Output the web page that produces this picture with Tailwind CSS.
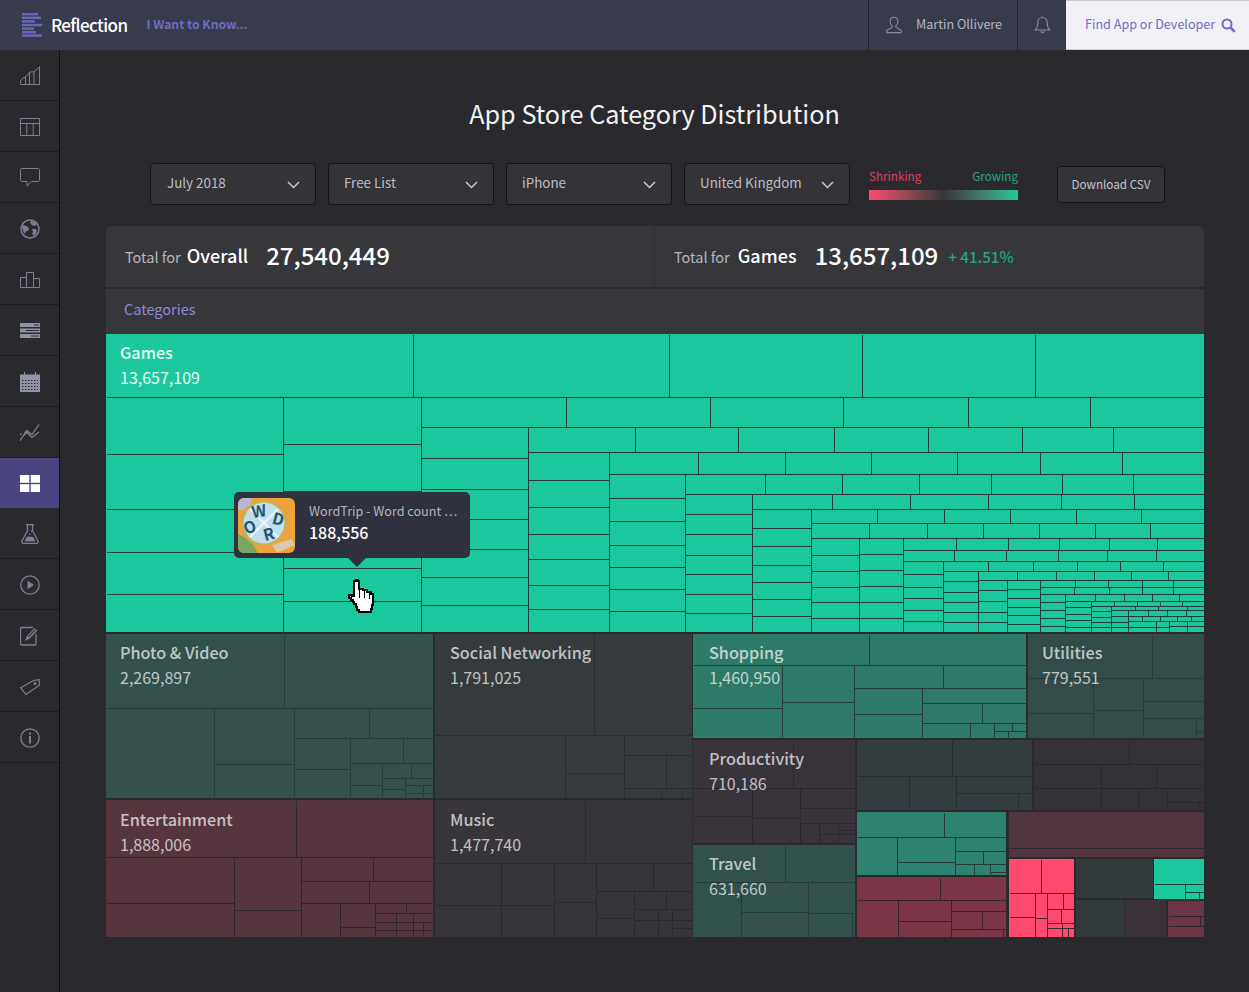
<!DOCTYPE html>
<html>
<head>
  <title>App Store Category Distribution</title>
  <script src="https://cdn.jsdelivr.net/npm/@tailwindcss/browser@4"></script>
</head>
<body class="h-[992px] overflow-hidden bg-[#29292e] font-['Noto_Sans_CJK_SC','Liberation_Sans',sans-serif] text-[#c9c9cf]">

  <!-- top bar -->
  <header class="flex h-[50px] items-stretch bg-[#383b4c]">
    <div class="flex items-center pl-[22px]">
      <svg width="21" height="24" viewBox="0 0 21 24" fill="#6a66b8">
        <rect x="0" y="0" width="16" height="2.4"/><rect x="0" y="3.6" width="19" height="2.4"/><rect x="0" y="7.2" width="13" height="2.4"/><rect x="0" y="10.8" width="20" height="2.4"/><rect x="0" y="14.4" width="12" height="2.4"/><rect x="0" y="18" width="14" height="2.4"/><rect x="0" y="21.4" width="20" height="2.4"/>
      </svg>
      <span class="ml-[8px] pb-[1px] text-[17px] font-medium tracking-[-0.6px] text-white">Reflection</span>
      <span class="ml-[19px] pb-[2px] text-[12.200px] font-bold text-[#716dc2]">I Want to Know...</span>
    </div>
    <div class="ml-auto flex items-stretch">
      <div class="flex w-[149px] items-center border-l border-[#222229] pl-[16px]">
        <svg width="18" height="18" viewBox="0 0 18 18" fill="none" stroke="#8a8d9e" stroke-width="1.1"><path d="M9 1.2c2.4 0 3.9 1.9 3.9 4.3 0 2-1 3.6-2 4.4v1.4c0 .8 5.6 1.6 5.6 4.2 0 .8-.4 1.1-1 1.1H2.500c-.6 0-1-.3-1-1.100 0-2.600 5.600-3.400 5.600-4.200V9.900c-1-.8-2-2.400-2-4.400C5.100 3.100 6.600 1.200 9 1.200z"/></svg>
        <span class="ml-[13px] pb-[1px] text-[12.600px] text-[#b6b7c1]">Martin Ollivere</span>
      </div>
      <div class="flex w-[49px] items-center justify-center border-l border-[#222229]">
        <svg width="17" height="18" viewBox="0 0 17 18" fill="none" stroke="#8a8d9e" stroke-width="1.1"><path d="M8.500 1.500c-3 0-4.700 2.300-4.700 5 0 3.800-.6 5.500-2.500 7.500h14.400c-1.900-2-2.500-3.700-2.500-7.500 0-2.700-1.700-5-4.700-5zM7 15c0 1 .6 1.800 1.500 1.800S10 16 10 15M8.500 1.500V.5"/></svg>
      </div>
      <div class="flex w-[183px] items-center border-y border-[#c9cad4] bg-[#f1f1f6] pl-[19px]">
        <span class="whitespace-nowrap pb-[1px] text-[12.600px] text-[#716dc2]">Find App or Developer</span>
        <svg class="ml-[6px] shrink-0" width="15" height="15" viewBox="0 0 15 15" fill="none" stroke="#716dc2"><circle cx="6" cy="6" r="4.500" stroke-width="2"/><path d="M9.500 9.500l4.300 4.300" stroke-width="2.600"/></svg>
      </div>
    </div>
  </header>

  <div class="flex h-[942px]">
    <!-- sidebar -->
    <nav class="w-[60px] shrink-0 border-r border-[#111114]">
      <div class="flex h-[51px] items-center justify-center border-b border-[#1b1b1f] pt-[1px]">
        <svg width="20" height="19" viewBox="0 0 20 19" fill="none" stroke="#7b7f92"><path d="M.500 18.500h19V.800l-5.500 5-4 .200-4.500 5-2.500 1-2.500 3zM5.500 11v7.500M9.500 6.500v12M14 6v12.500"/></svg>
      </div>
      <div class="flex h-[51px] items-center justify-center border-b border-[#1b1b1f] pt-[1px]">
        <svg width="20" height="18" viewBox="0 0 20 18" fill="none" stroke="#7b7f92"><path d="M.500.500h19v17H.500zM.500 5.500h19M6.800 5.500v12M13.200 5.500v12"/></svg>
      </div>
      <div class="flex h-[51px] items-center justify-center border-b border-[#1b1b1f] pt-[1px]">
        <svg width="20" height="19" viewBox="0 0 20 19" fill="none" stroke="#7b7f92"><path d="M2 .500h16c1 0 1.500.5 1.500 1.500v10c0 1-.5 1.500-1.500 1.500h-6.500l-4.500 4.500v-4.500H2c-1 0-1.500-.5-1.500-1.500V2C.500 1 1 .500 2 .500z"/></svg>
      </div>
      <div class="flex h-[51px] items-center justify-center border-b border-[#1b1b1f] pt-[1px]">
        <svg width="20" height="20" viewBox="0 0 20 20"><circle cx="10" cy="10" r="9" fill="none" stroke="#7b7f92" stroke-width="1.500"/><path fill="#7b7f92" d="M3 6l4 1 2 3-1 2-2 0-1 3-2-3-1-4zM11 2l4 1 2 3-3 1-2-1-2-2zM12 10l4 0 1 3-3 4-2-2 1-2z"/></svg>
      </div>
      <div class="flex h-[51px] items-center justify-center border-b border-[#1b1b1f] pt-[1px]">
        <svg width="20" height="16" viewBox="0 0 20 16" fill="none" stroke="#7b7f92"><path d="M.500 15.500v-10h6v10zM6.500 15.500V.500h7v15zM13.500 15.500v-9h6v9z"/></svg>
      </div>
      <div class="flex h-[51px] items-center justify-center border-b border-[#1b1b1f] pt-[1px]">
        <svg width="20" height="15" viewBox="0 0 20 15"><path fill="#8f93a6" d="M0 0h20v4H0zM0 5.500h20v4H0zM0 11h20v4H0z"/><path stroke="#29292e" d="M14 2h5M6 7.500h13M11 13h8"/></svg>
      </div>
      <div class="flex h-[51px] items-center justify-center border-b border-[#1b1b1f] pt-[1px]">
        <svg width="20" height="20" viewBox="0 0 20 20"><path fill="#8f93a6" d="M0 2.500h4V0h1v2.500h10V0h1v2.500h4V20H0z"/><path stroke="#29292e" stroke-dasharray="1.500 1.500" d="M2 8.500h16M2 11.500h16M2 14.500h16M2 17.500h16"/></svg>
      </div>
      <div class="flex h-[51px] items-center justify-center border-b border-[#1b1b1f] pt-[1px]">
        <svg width="20" height="18" viewBox="0 0 20 18" fill="none" stroke="#7b7f92" stroke-width="1.300"><path d="M0 17L6.500 6.500l5.500 4L19 .500M0 10h1.500M3 12l4-3.500 5 5 7-5.500"/></svg>
      </div>
      <div class="flex h-[50px] items-center justify-center bg-[#4a4480]">
        <svg width="20" height="17" viewBox="0 0 20 17" fill="#fff"><rect width="9.300" height="7.800"/><rect x="10.700" width="9.300" height="7.800"/><rect y="9.200" width="9.300" height="7.800"/><rect x="10.700" y="9.200" width="9.300" height="7.800"/></svg>
      </div>
      <div class="flex h-[51px] items-center justify-center border-b border-[#1b1b1f] pt-[1px]">
        <svg width="18" height="20" viewBox="0 0 18 20"><path fill="none" stroke="#7b7f92" stroke-width="1.300" d="M5 .700h8M6.500.700v6L1 17c-.5 1.300.3 2.300 1.500 2.300h13c1.200 0 2-1 1.500-2.300L11.500 6.700v-6"/><path fill="#7b7f92" d="M3.500 17.500l2-4.500c2-1 4-.2 7 0l2 4.500zM8 9.500h1.500V11H8zM10 6.500h1V8h-1z"/></svg>
      </div>
      <div class="flex h-[51px] items-center justify-center border-b border-[#1b1b1f] pt-[1px]">
        <svg width="20" height="20" viewBox="0 0 20 20"><circle cx="10" cy="10" r="9.200" fill="none" stroke="#7b7f92" stroke-width="1.300"/><path fill="#7b7f92" d="M7.500 5.800l6.500 4.200-6.500 4.200z"/></svg>
      </div>
      <div class="flex h-[51px] items-center justify-center border-b border-[#1b1b1f] pt-[1px]">
        <svg width="20" height="20" viewBox="0 0 20 20"><path fill="none" stroke="#7b7f92" stroke-width="1.300" d="M13 1.500H1.500c-.6 0-1 .4-1 1v15.500c0 .6.400 1 1 1H15c.6 0 1-.4 1-1V8"/><path fill="#7b7f92" d="M5 15l1.500-4.500L14.500 2l2.800 2.800-8 8.200z"/><path fill="#29292e" d="M8 10.500l6.800-7 .8.800-6.800 7z"/></svg>
      </div>
      <div class="flex h-[51px] items-center justify-center border-b border-[#1b1b1f] pt-[1px]">
        <svg width="20" height="18" viewBox="0 0 20 18" fill="none" stroke="#7b7f92" stroke-width="1.200"><path d="M.700 9.800L13.500 2.500l5.600-.8.300 5.500L6 16.500z"/><circle cx="15" cy="5.500" r="1"/></svg>
      </div>
      <div class="flex h-[51px] items-center justify-center border-b border-[#1b1b1f] pt-[1px]">
        <svg width="20" height="20" viewBox="0 0 20 20"><circle cx="10" cy="10" r="9.200" fill="none" stroke="#7b7f92" stroke-width="1.300"/><path fill="#7b7f92" d="M9 4.500h2v2H9zM9 8h2v7.500H9z"/></svg>
      </div>
    </nav>

    <!-- main -->
    <main class="flex-1 pl-[46px] pr-[45px]">
      <h1 class="pr-[1px] pt-[43px] text-center text-[25.200px] leading-[41px] text-[#f2f2f4]">App Store Category Distribution</h1>

      <div class="mt-[29px] flex h-[42px] items-start pl-[44px]">
        <div class="flex h-[42px] w-[166px] items-center justify-between rounded-[3px] border border-[#131316] bg-[#333338] pb-[4px] pl-[15px] pr-[15px] text-[13.400px] text-[#bdbdc3]">
          <span class="ml-[1px]">July 2018</span>
          <svg class="mt-[6px]" width="13" height="8" viewBox="0 0 13 8" fill="none" stroke="#c9c9cf" stroke-width="1.500"><path d="M1 1l5.500 5.500L12 1"/></svg>
        </div>
        <div class="ml-[12px] flex h-[42px] w-[166px] items-center justify-between rounded-[3px] border border-[#131316] bg-[#333338] pb-[4px] pl-[15px] pr-[15px] text-[13.400px] text-[#bdbdc3]">
          <span>Free List</span>
          <svg class="mt-[6px]" width="13" height="8" viewBox="0 0 13 8" fill="none" stroke="#c9c9cf" stroke-width="1.500"><path d="M1 1l5.500 5.500L12 1"/></svg>
        </div>
        <div class="ml-[12px] flex h-[42px] w-[166px] items-center justify-between rounded-[3px] border border-[#131316] bg-[#333338] pb-[4px] pl-[15px] pr-[15px] text-[13.400px] text-[#bdbdc3]">
          <span>iPhone</span>
          <svg class="mt-[6px]" width="13" height="8" viewBox="0 0 13 8" fill="none" stroke="#c9c9cf" stroke-width="1.500"><path d="M1 1l5.500 5.500L12 1"/></svg>
        </div>
        <div class="ml-[12px] flex h-[42px] w-[166px] items-center justify-between rounded-[3px] border border-[#131316] bg-[#333338] pb-[4px] pl-[15px] pr-[15px] text-[13.400px] text-[#bdbdc3]">
          <span>United Kingdom</span>
          <svg class="mt-[6px]" width="13" height="8" viewBox="0 0 13 8" fill="none" stroke="#c9c9cf" stroke-width="1.500"><path d="M1 1l5.500 5.500L12 1"/></svg>
        </div>
        <div class="ml-[19px] w-[149px]">
          <div class="flex h-[27px] items-center justify-between pb-[2px] text-[11.700px]">
            <span class="text-[#d8405f]">Shrinking</span>
            <span class="text-[#2aa583]">Growing</span>
          </div>
          <div class="h-[10px] bg-linear-to-r from-[#ff4a6e] via-[#35363a] to-[#1bc89e]"></div>
        </div>
        <div class="ml-[39px] mt-[3px] flex h-[37px] w-[108px] items-center justify-center rounded-[4px] border border-[#131316] bg-[#333338] pb-[2px] text-[11.700px] text-[#c4c4ca]">Download CSV</div>
      </div>

      <!-- panel -->
      <section class="mt-[21px] overflow-hidden rounded-t-[5px] bg-[#36363b]">
        <div class="flex h-[63px] border-b-2 border-[#2a2a2e]">
          <div class="flex w-[549px] items-center border-r border-[#2e2e33] pb-[3px] pl-[19px]">
            <span class="mt-[3px] text-[14.500px] text-[#b6b6bc]">Total for</span>
            <span class="ml-[6px] text-[18px] font-medium text-white">Overall</span>
            <span class="ml-[18px] text-[24px] font-medium text-white">27,540,449</span>
          </div>
          <div class="flex flex-1 items-center pb-[3px] pl-[19px]">
            <span class="mt-[3px] text-[14.500px] text-[#b6b6bc]">Total for</span>
            <span class="ml-[8px] text-[18px] font-medium text-white">Games</span>
            <span class="ml-[18px] text-[24px] font-medium text-white">13,657,109</span>
            <span class="ml-[10px] mt-[3px] text-[15.200px] font-medium text-[#26a57f]">+ 41.51%</span>
          </div>
        </div>
        <div class="flex h-[45px] items-center pb-[5px] pl-[18px] text-[14.500px] text-[#8f8ad8]">Categories</div>

        <!-- treemap -->
        <div class="relative h-[603px] w-[1098px] bg-[#2a2a2e]">
          <svg class="absolute inset-0" width="1098" height="603" viewBox="106 334 1098 603" shape-rendering="crispEdges">
            <g fill="none" stroke="#2a2d30" stroke-width="1">
              <!-- Games -->
              <rect x="106" y="334" width="1098" height="298" fill="#1bc89e" stroke="none"/>
              <g transform="translate(.5 .5)" stroke="#263a3a">
                <path d="M106 397H1204M413 334V397M669 334V397M862 334V397M1035 334V397M283 397V632M421 397V632"/>
                <path d="M106 454H283M106 509H283M106 552H283M106 594H283M283 444H421M283 491H421M283 530H421M283 568H421M283 601H421"/>
                <path d="M421 427H1204M566 397V427M710 397V427M843 397V427M968 397V427M1090 397V427"/>
                <path d="M421 458H528M421 489H528M421 519H528M421 549H528M421 577H528M421 605H528M528 427V632"/>
                <path d="M528 452H1204M635 427V452M738 427V452M834 427V452M928 427V452M1022 427V452M1113 427V452"/>
                <path d="M528 480H609M528 507H609M528 534H609M528 559H609M528 585H609M528 609H609M609 452V632"/>
                <path d="M609 474H1204M698 452V474M785 452V474M871 452V474M957 452V474M1040 452V474M1122 452V474"/>
                <path d="M609 498H685M609 521H685M609 545H685M609 567H685M609 589H685M609 611H685M685 474V632"/>
                <path d="M685 494H1204M765 474V494M842 474V494M919 474V494M991 474V494M1062 474V494M1133 474V494"/>
                <path d="M685 514H752M685 534H752M685 555H752M685 574H752M685 594H752M685 613H752M752 494V632"/>
                <path d="M752 509H1204M832 494V509M910 494V509M988 494V509M1061 494V509M1134 494V509"/>
                <path d="M752 528H811M752 546H811M752 565H811M752 582H811M752 599H811M752 616H811M811 509V632"/>
                <path d="M811 523H1204M877 509V523M944 509V523M1010 509V523M1076 509V523M1141 509V523"/>
                <path d="M811 538H1204M869 523V538M927 523V538M983 523V538M1039 523V538M1095 523V538M1150 523V538"/>
                <path d="M811 555H859M811 571H859M811 587H859M811 602H859M811 618H859M859 538V632"/>
                <path d="M859 554H903M859 570H903M859 586H903M859 602H903M859 618H903M903 538V632"/>
                <path d="M903 550H1204M956 538V550M1008 538V550M1059 538V550M1109 538V550M1157 538V550"/>
                <path d="M903 561H1204M954 550V561M1006 550V561M1058 550V561M1107 550V561M1156 550V561"/>
                <path d="M903 574H943M903 587H943M903 598H943M903 610H943M903 621H943M943 561V632"/>
                <path d="M943 571H1204M988 561V571M1033 561V571M1077 561V571M1120 561V571M1163 561V571"/>
                <path d="M943 581H978M943 592H978M943 602H978M943 612H978M943 622H978M978 571V632"/>
                <path d="M978 580H1204M1017 571V580M1056 571V580M1094 571V580M1131 571V580M1168 571V580"/>
                <path d="M978 590H1007M978 601H1007M978 612H1007M978 622H1007M1007 580V632"/>
                <path d="M1007 589H1040M1007 598H1040M1007 607H1040M1007 615H1040M1007 624H1040M1040 580V632"/>
                <path d="M1040 587H1204M1075 580V587M1108 580V587M1142 580V587M1173 580V587"/>
                <path d="M1040 594H1204M1074 587V594M1109 587V594M1142 587V594M1173 587V594"/>
                <path d="M1040 602H1065M1040 610H1065M1040 618H1065M1040 626H1065M1065 594V632"/>
                <path d="M1065 601H1204M1095 594V601M1124 594V601M1152 594V601M1179 594V601"/>
                <path d="M1065 607H1091M1065 614H1091M1065 620H1091M1065 627H1091M1091 601V632"/>
                <path d="M1091 606H1204M1114 601V606M1137 601V606M1160 601V606M1182 601V606"/>
                <path d="M1091 611H1111M1091 617H1111M1091 622H1111M1091 627H1111M1111 606V632"/>
                <path d="M1111 610H1204M1135 606V610M1158 606V610M1187 606V610M1111 616H1128M1111 622H1128M1111 627H1128M1128 610V632"/>
                <path d="M1128 616H1204M1148 610V616M1167 610V616M1186 610V616M1128 621H1204M1142 616V621M1160 616V621M1177 616V621M1191 616V621"/>
                <path d="M1128 627H1169M1156 621V632M1169 621V632M1187 621V632M1169 626H1204"/>
              </g>

              <!-- Photo & Video -->
              <rect x="106" y="634" width="327" height="164" fill="#33504c" stroke="none"/>
              <g transform="translate(.5 .5)" stroke="#27383a">
                <path d="M106 708H433M284 634V708M214 708V798M214 764H294M294 708V798M294 738H433M369 708V738M294 769H350M350 738V798M403 738V763M350 763H433M382 763V798M350 785H382M411 763V778M382 778H433M405 778V798M382 789H405M405 785H433M405 793H433M423 785V798"/>
              </g>
              <!-- Social Networking -->
              <rect x="435" y="634" width="257" height="164" fill="#353a3d" stroke="none"/>
              <g transform="translate(.5 .5)" stroke="#2a2d30">
                <path d="M594 634V735M435 735H692M565 735V798M565 773H624M624 735V798M624 755H692M666 755V788M624 788H692M661 788V798M682 788V798"/>
              </g>
              <!-- Entertainment -->
              <rect x="106" y="800" width="327" height="137" fill="#56363e" stroke="none"/>
              <g transform="translate(.5 .5)" stroke="#2c2529">
                <path d="M296 800V857M106 857H433M234 857V937M106 903H234M301 857V937M234 910H301M301 881H433M373 857V881M301 903H433M369 881V903M340 903V937M340 927H375M375 903V937M406 903V913M375 913H433M396 913V937M375 922H396M375 930H396M413 913V937M396 922H433M396 930H433M423 922V937"/>
              </g>
              <!-- Music -->
              <rect x="435" y="800" width="257" height="137" fill="#37343a" stroke="none"/>
              <g transform="translate(.5 .5)" stroke="#29282c">
                <path d="M585 800V863M435 863H692M501 863V937M554 863V937M596 863V937M435 905H554M554 902H596M596 891H692M653 863V891M634 891V937M596 918H634M666 891V909M634 909H692M658 909V937M634 920H692M672 909V937M672 928H692"/>
              </g>
              <!-- Shopping -->
              <rect x="693" y="634" width="333" height="104" fill="#2e7a69" stroke="none"/>
              <g transform="translate(.5 .5)" stroke="#263a3a">
                <path d="M693 665H1026M869 634V665M782 665V738M693 708H782M782 702H854M854 665V738M854 688H1026M943 665V688M922 688V738M854 714H922M922 703H1026M922 723H1026M982 703V723M970 723V738M994 723V738M994 731H1026M1012 723V731M1008 731V738"/>
              </g>
              <!-- Utilities -->
              <rect x="1028" y="634" width="176" height="104" fill="#334c49" stroke="none"/>
              <g transform="translate(.5 .5)" stroke="#27383a">
                <path d="M1152 634V678M1028 678H1204M1093 678V738M1028 713H1093M1093 710H1143M1143 678V738M1143 701H1204M1143 718H1204M1196 718V738M1196 732H1204"/>
              </g>
              <!-- Productivity -->
              <rect x="693" y="740" width="162" height="103" fill="#39343b" stroke="none"/>
              <g transform="translate(.5 .5)" stroke="#29282c">
                <path d="M793 740V788M693 788H855M752 788V843M693 816H752M752 818H800M800 788V843M800 808H855M800 823H855M819 823V843M838 823V843M838 830H855M819 834H855"/>
              </g>
              <rect x="857" y="740" width="175" height="70" fill="#333d3f" stroke="none"/>
              <g transform="translate(.5 .5)" stroke="#282c2e">
                <path d="M952 740V776M857 776H1032M909 776V810M956 776V810M956 793H1032M1018 793V810"/>
              </g>
              <rect x="1034" y="740" width="170" height="70" fill="#343237" stroke="none"/>
              <g transform="translate(.5 .5)" stroke="#28272b">
                <path d="M1129 740V764M1034 764H1204M1101 764V810M1156 764V788M1034 788H1204M1138 788V810M1167 788V810M1167 802H1204M1199 802V810"/>
              </g>
              <rect x="857" y="812" width="149" height="63" fill="#2d8270" stroke="none"/>
              <g transform="translate(.5 .5)" stroke="#263a3a">
                <path d="M857 837H1006M944 812V837M897 837V875M897 862H955M955 837V875M955 851H1006M955 864H1006M983 851V864M974 864V875M990 864V875M990 872H1006"/>
              </g>
              <rect x="1009" y="812" width="195" height="45" fill="#52343e" stroke="none"/>
              <path transform="translate(.5 .5)" stroke="#2c2529" d="M1009 848H1204"/>
              <rect x="857" y="877" width="149" height="60" fill="#7c3648" stroke="none"/>
              <g transform="translate(.5 .5)" stroke="#33262c">
                <path d="M940 877V900M857 900H1006M898 900V937M898 921H951M951 900V937M951 911H1006M951 929H1006M982 911V929M1003 929V937"/>
              </g>
              <!-- bright red -->
              <rect x="1009" y="859" width="65" height="78" fill="#ff4a6e" stroke="none"/>
              <g transform="translate(.5 .5)" stroke="#3a2a30">
                <path d="M1041 859V893M1009 893H1074M1035 893V937M1009 917H1035M1047 893V937M1035 918H1047M1047 909H1074M1063 893V909M1047 923H1074M1061 909V923M1062 923V937M1068 928V937M1047 928H1074"/>
              </g>
              <rect x="1076" y="859" width="77" height="39" fill="#333a3c" stroke="none"/>
              <rect x="1154" y="859" width="50" height="40" fill="#1bc89e" stroke="none"/>
              <g transform="translate(.5 .5)" stroke="#263a3a">
                <path d="M1154 884H1204M1185 884V899M1185 892H1204M1199 892V899"/>
              </g>
              <rect x="1076" y="900" width="48" height="37" fill="#333a3c" stroke="none"/>
              <rect x="1125" y="900" width="41" height="37" fill="#3a3238" stroke="none"/>
              <rect x="1168" y="901" width="36" height="36" fill="#6b3545" stroke="none"/>
              <path transform="translate(.5 .5)" stroke="#2c2529" d="M1168 916H1204M1168 926H1204M1200 916V926"/>
              <!-- Travel -->
              <rect x="693" y="845" width="162" height="92" fill="#32504c" stroke="none"/>
              <g transform="translate(.5 .5)" stroke="#27383a">
                <path d="M785 845V882M693 882H855M741 882V937M741 912H808M808 882V937M808 913H855M852 913V937"/>
              </g>
            </g>
          </svg>

          <!-- labels sit over the map -->
          <div class="absolute left-[14px] top-[6px] text-white/90"><div class="text-[16.200px] font-medium leading-[25px]">Games</div><div class="text-[16px] leading-[25px]">13,657,109</div></div>
          <div class="absolute left-[14px] top-[306px] text-white/70"><div class="text-[16.200px] font-medium leading-[25px]">Photo &amp; Video</div><div class="text-[16px] leading-[25px]">2,269,897</div></div>
          <div class="absolute left-[344px] top-[306px] text-white/70"><div class="text-[16.200px] font-medium leading-[25px]">Social Networking</div><div class="text-[16px] leading-[25px]">1,791,025</div></div>
          <div class="absolute left-[603px] top-[306px] text-white/70"><div class="text-[16.200px] font-medium leading-[25px]">Shopping</div><div class="text-[16px] leading-[25px]">1,460,950</div></div>
          <div class="absolute left-[936px] top-[306px] text-white/70"><div class="text-[16.200px] font-medium leading-[25px]">Utilities</div><div class="text-[16px] leading-[25px]">779,551</div></div>
          <div class="absolute left-[14px] top-[473px] text-white/70"><div class="text-[16.200px] font-medium leading-[25px]">Entertainment</div><div class="text-[16px] leading-[25px]">1,888,006</div></div>
          <div class="absolute left-[344px] top-[473px] text-white/70"><div class="text-[16.200px] font-medium leading-[25px]">Music</div><div class="text-[16px] leading-[25px]">1,477,740</div></div>
          <div class="absolute left-[603px] top-[412px] text-white/70"><div class="text-[16.200px] font-medium leading-[25px]">Productivity</div><div class="text-[16px] leading-[25px]">710,186</div></div>
          <div class="absolute left-[603px] top-[517px] text-white/70"><div class="text-[16.200px] font-medium leading-[25px]">Travel</div><div class="text-[16px] leading-[25px]">631,660</div></div>

          <!-- tooltip -->
          <div class="absolute left-[128px] top-[158px] flex h-[66px] w-[236px] items-center rounded-[5px] bg-[#30313f] pl-[4px]">
            <svg width="57" height="55" viewBox="0 0 57 55" class="shrink-0 rounded-[6px]">
              <rect width="57" height="55" fill="#eda23a"/>
              <rect width="13" height="12" fill="#b9b6d4"/>
              <path d="M0 36l12 6 8 13H0z" fill="#7aa860"/>
              <path d="M34 47l20-6 3 6-18 8z" fill="#d9c9ae"/>
              <circle cx="26" cy="25" r="23.500" fill="#d5a94e"/>
              <circle cx="26" cy="25" r="20.500" fill="#bfe0ea"/>
              <path d="M12 39L40 11M12 11L40 39" stroke="#eef5f6" stroke-width="2"/>
              <text x="21" y="19" text-anchor="middle" font-size="16" font-weight="700" fill="#27546f" transform="rotate(-10 21 14)">W</text>
              <text x="12" y="35" text-anchor="middle" font-size="16" font-weight="700" fill="#27546f" transform="rotate(-20 12 30)">O</text>
              <text x="40" y="27" text-anchor="middle" font-size="16" font-weight="700" fill="#27546f" transform="rotate(15 40 22)">D</text>
              <text x="31" y="42" text-anchor="middle" font-size="16" font-weight="700" fill="#27546f" transform="rotate(-15 31 37)">R</text>
            </svg>
            <div class="ml-[14px] w-[152px] pb-[6px]">
              <div class="whitespace-nowrap text-[12.600px] leading-[20px] text-[#b4b5bd]">WordTrip - Word count …</div>
              <div class="text-[16px] font-medium leading-[22px] text-white">188,556</div>
            </div>
            <div class="absolute left-[114px] top-[66px] h-0 w-0 border-x-[9px] border-t-[9px] border-x-transparent border-t-[#30313f]"></div>
          </div>

          <!-- cursor -->
          <svg class="absolute left-[242px] top-[245px]" width="28" height="37" viewBox="0 0 28 37" shape-rendering="crispEdges">
            <path fill="#fff" stroke="#000" stroke-width="1.500" d="M6 2h2V1h2v1h1v8h4v1h4v2h4v2h2v11h-1v4h-1v3H11v-2h-2v-3H8v-3H6v-2H5v-2H3v-2H1v-3h3v1h2z"/>
            <path stroke="#000" d="M11.500 10v9M16.500 11v8M21.500 14v6"/>
          </svg>
        </div>
      </section>
    </main>
  </div>
</body>
</html>
